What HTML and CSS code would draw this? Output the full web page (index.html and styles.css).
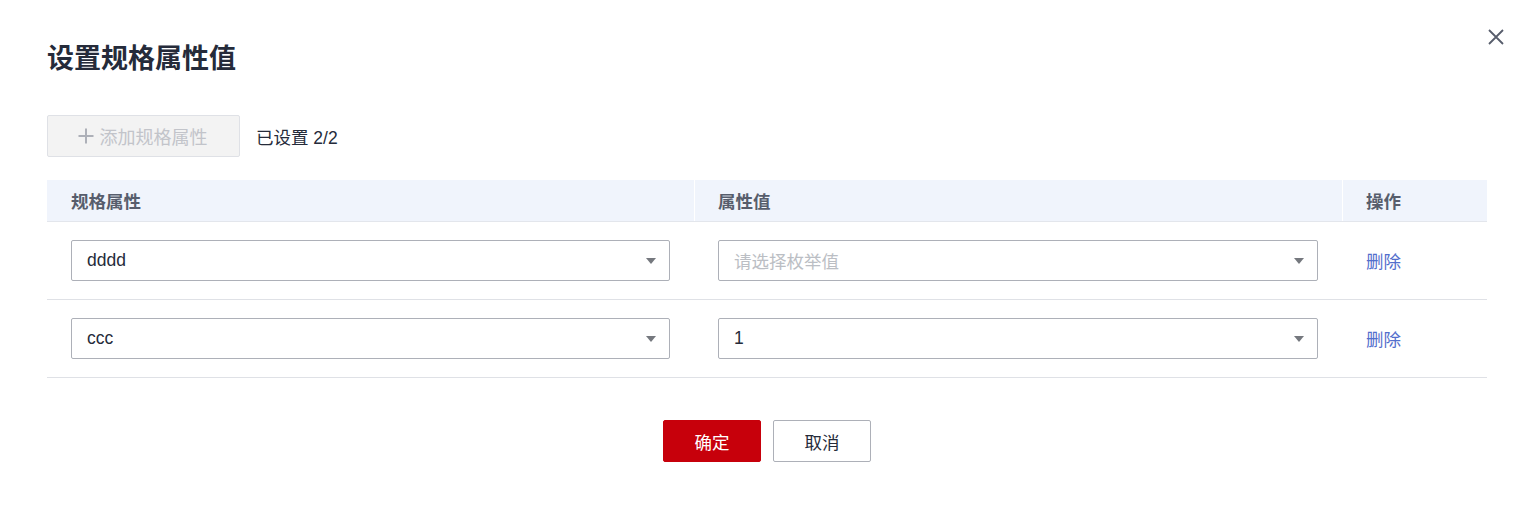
FILE: index.html
```html
<!DOCTYPE html>
<html lang="zh-CN">
<head>
<meta charset="utf-8">
<title>设置规格属性值</title>
<link rel="stylesheet" href="styles.css">
</head>
<body>
<div class="dialog">
  <button class="close" aria-label="关闭">
    <svg width="16" height="16" viewBox="0 0 16 16"><path d="M1 1 L15 15 M15 1 L1 15" stroke="#575d6c" stroke-width="1.8" fill="none"/></svg>
  </button>
  <h1 class="title">设置规格属性值</h1>
  <div class="toolbar">
    <button class="btn-add" disabled>
      <svg width="16" height="16" viewBox="0 0 16 16"><path d="M8 0.5 V15.5 M0.5 8 H15.5" stroke="#adb0b8" stroke-width="2" fill="none"/></svg>
      <span>添加规格属性</span>
    </button>
    <span class="count">已设置 2/2</span>
  </div>
  <div class="table">
    <div class="row head">
      <div class="cell c1">规格属性</div>
      <div class="cell c2">属性值</div>
      <div class="cell c3">操作</div>
    </div>
    <div class="row">
      <div class="cell c1"><div class="select"><span>dddd</span><i class="arrow"></i></div></div>
      <div class="cell c2"><div class="select"><span class="ph">请选择枚举值</span><i class="arrow"></i></div></div>
      <div class="cell c3"><a class="link">删除</a></div>
    </div>
    <div class="row">
      <div class="cell c1"><div class="select"><span>ccc</span><i class="arrow"></i></div></div>
      <div class="cell c2"><div class="select"><span>1</span><i class="arrow"></i></div></div>
      <div class="cell c3"><a class="link">删除</a></div>
    </div>
  </div>
  <div class="footer">
    <button class="btn primary">确定</button>
    <button class="btn">取消</button>
  </div>
</div>
</body>
</html>
```

FILE: styles.css
```css
* { box-sizing: border-box; }
html, body { margin: 0; padding: 0; background: #fff; }
body {
  font-family: "Liberation Sans", "Noto Sans CJK SC", sans-serif;
  color: #252b3a;
  width: 1530px;
  height: 506px;
  overflow: hidden;
}
.dialog {
  position: relative;
  padding: 40px 43px 0 47px;
}
.close {
  position: absolute;
  top: 29px;
  right: 26px;
  width: 16px;
  height: 16px;
  padding: 0;
  border: 0;
  background: none;
  display: flex;
}
.title {
  margin: 0;
  font-size: 27px;
  line-height: 38px;
  font-weight: 700;
  color: #252b3a;
  letter-spacing: 0;
}
.toolbar {
  margin-top: 37px;
  display: flex;
  align-items: center;
  gap: 16px;
}
.btn-add {
  width: 193px;
  height: 42px;
  border: 1px solid #dfe1e6;
  border-radius: 2px;
  background: #f3f3f3;
  color: #c2c4ca;
  font-family: inherit;
  font-size: 18px;
  display: flex;
  align-items: center;
  justify-content: center;
  gap: 6px;
  padding: 0 2px 0 0;
}
.btn-add svg { flex: none; }
.count {
  font-size: 17.5px;
  color: #252b3a;
}
.table {
  margin-top: 23px;
  width: 1440px;
}
.row {
  display: grid;
  grid-template-columns: 647px 648px 145px;
  border-bottom: 1px solid #dfe1e6;
  height: 78px;
  align-items: center;
}
.row.head {
  background: #f0f4fc;
  height: 42px;
  border-bottom-color: #e3e6ec;
  font-weight: 700;
  color: #575d6c;
  font-size: 17.5px;
}
.row.head .cell { height: 100%; display: flex; align-items: center; }
.row.head .c2, .row.head .c3 { border-left: 1px solid #ffffff; }
.cell {
  padding: 0 24px;
}
.row.head .c2 { padding-left: 23px; }
.row.head .c3 { padding-left: 23px; }
.select {
  height: 41px;
  border: 1px solid #adb0b8;
  border-radius: 2px;
  display: flex;
  align-items: center;
  justify-content: space-between;
  padding: 0 13px 0 15px;
  font-size: 17.5px;
  color: #252b3a;
  background: #fff;
}
.select .ph { color: #bbbec4; }
.arrow {
  width: 0;
  height: 0;
  border-left: 5.5px solid transparent;
  border-right: 5.5px solid transparent;
  border-top: 6px solid #75787e;
}
.link {
  color: #526ecc;
  font-size: 17.5px;
  cursor: pointer;
}
.footer {
  margin-top: 42px;
  width: 1440px;
  display: flex;
  justify-content: center;
  gap: 12px;
}
.btn {
  width: 98px;
  height: 42px;
  border: 1px solid #adb0b8;
  border-radius: 2px;
  background: #fff;
  color: #252b3a;
  font-family: inherit;
  font-size: 17.5px;
  padding: 0;
}
.btn.primary {
  background: #c7000b;
  border-color: #c7000b;
  color: #fff;
}
```
